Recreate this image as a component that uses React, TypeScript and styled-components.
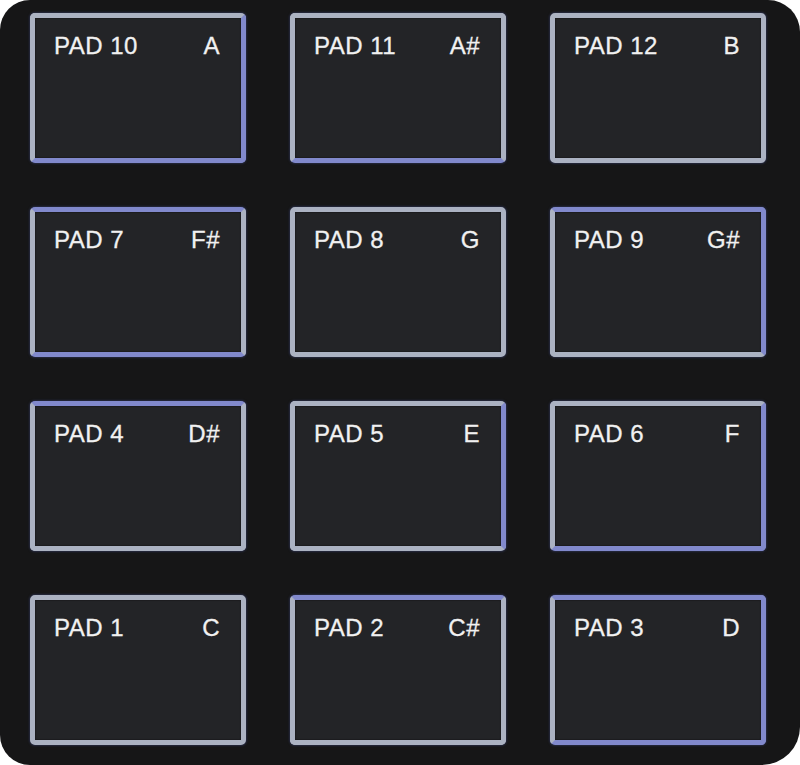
import React from "react";
import styled, { createGlobalStyle } from "styled-components";

const GlobalStyle = createGlobalStyle`
  html, body { margin: 0; padding: 0; background: #ffffff; }
  body { font-family: "Liberation Sans", Arial, sans-serif; }
`;

type Side = "t" | "r" | "b" | "l";

const LIGHT = "#abb2c2";
const BLUE = "#8189cc";

const Panel = styled.div`
  box-sizing: border-box;
  width: 800px;
  height: 765px;
  background: #161617;
  border-radius: 30px 32px 38px 30px;
  padding: 13px 0 0 30px;
  display: grid;
  grid-template-columns: repeat(3, 216px);
  grid-auto-rows: 150px;
  column-gap: 44px;
  row-gap: 44px;
`;

const Pad = styled.div<{ $glow: Side[] }>`
  box-sizing: border-box;
  border: 5px solid ${LIGHT};
  border-top-color: ${(p) => (p.$glow.includes("t") ? BLUE : LIGHT)};
  border-right-color: ${(p) => (p.$glow.includes("r") ? BLUE : LIGHT)};
  border-bottom-color: ${(p) => (p.$glow.includes("b") ? BLUE : LIGHT)};
  border-left-color: ${(p) => (p.$glow.includes("l") ? BLUE : LIGHT)};
  border-radius: 5px;
  background: #232427;
  box-shadow: 0 0 2px 1px rgba(40, 44, 70, 0.9),
    inset 0 0 1px 1px rgba(20, 20, 24, 0.5);
  padding: 15px 21px 0 19px;
  display: flex;
  justify-content: space-between;
  align-items: flex-start;
`;

const Label = styled.span`
  font-family: "Liberation Sans", Arial, sans-serif;
  font-size: 24px;
  line-height: 25px;
  color: #f1f1f1;
  letter-spacing: 0.5px;
  -webkit-text-stroke: 0.3px #f1f1f1;
`;

const pads: { name: string; note: string; glow: Side[] }[] = [
  { name: "PAD 10", note: "A", glow: ["r", "b"] },
  { name: "PAD 11", note: "A#", glow: ["b"] },
  { name: "PAD 12", note: "B", glow: [] },
  { name: "PAD 7", note: "F#", glow: ["t", "b"] },
  { name: "PAD 8", note: "G", glow: [] },
  { name: "PAD 9", note: "G#", glow: ["t", "r"] },
  { name: "PAD 4", note: "D#", glow: ["t"] },
  { name: "PAD 5", note: "E", glow: ["r"] },
  { name: "PAD 6", note: "F", glow: ["r", "b"] },
  { name: "PAD 1", note: "C", glow: [] },
  { name: "PAD 2", note: "C#", glow: ["t"] },
  { name: "PAD 3", note: "D", glow: ["t", "r", "b"] },
];

export default function App() {
  return (
    <>
      <GlobalStyle />
      <Panel>
        {pads.map((p) => (
          <Pad key={p.name} $glow={p.glow}>
            <Label>{p.name}</Label>
            <Label>{p.note}</Label>
          </Pad>
        ))}
      </Panel>
    </>
  );
}
